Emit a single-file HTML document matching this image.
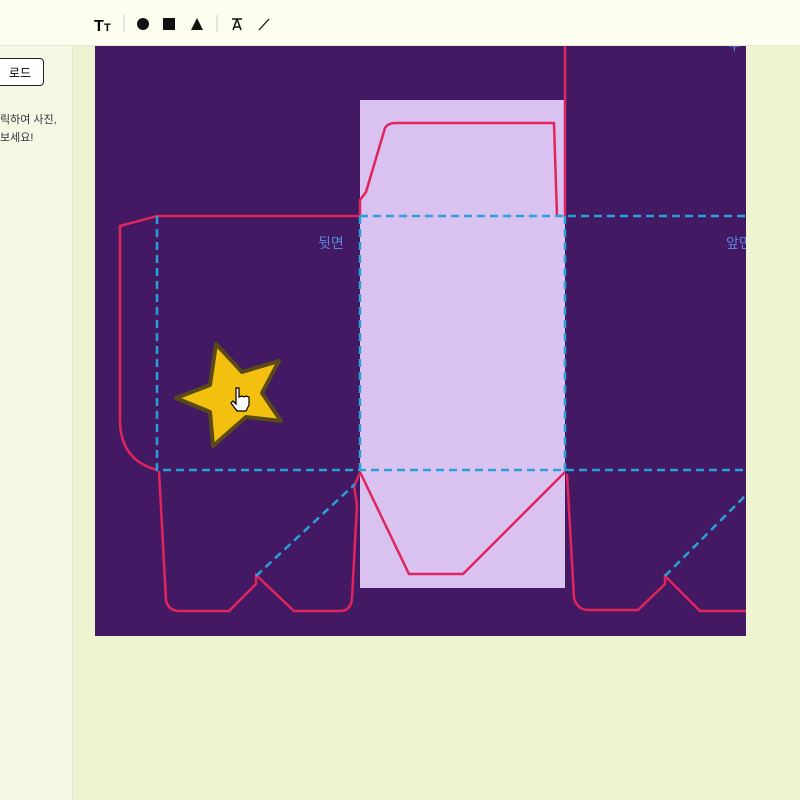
<!DOCTYPE html>
<html><head><meta charset="utf-8"><style>
body{margin:0;width:800px;height:800px;overflow:hidden;background:#eef4d2;font-family:"Liberation Sans","Noto Sans CJK KR",sans-serif;position:relative}
.hdr{position:absolute;left:0;top:0;width:800px;height:45px;background:#fdfdf0;border-bottom:1px solid #e8e8d8}
.side{position:absolute;left:0;top:46px;width:72px;height:754px;background:#f6f8e6;border-right:1px solid #e4e8cc}
.btn{position:absolute;left:-10px;top:58px;width:54px;height:28px;border:1px solid #222;border-radius:4px;background:#fff;font-size:12px;line-height:28px;text-align:right;box-sizing:border-box;padding-right:12px}
.txt{position:absolute;left:0;top:111px;font-size:11px;line-height:18px;color:#333}
svg{position:absolute;left:0;top:0}
</style></head><body>
<div class="hdr"></div>
<div class="side"></div>
<div class="btn">로드</div>
<div class="txt">릭하여 사진,<br>보세요!</div>
<svg width="800" height="800" viewBox="0 0 800 800">
<defs><clipPath id="c"><rect x="95" y="46" width="651" height="590"/></clipPath></defs>
<text x="94" y="31" font-size="16" font-weight="bold" font-family="Liberation Sans">T</text><text x="104" y="31" font-size="11" font-weight="bold" font-family="Liberation Sans">T</text>
<line x1="124" y1="15" x2="124" y2="32" stroke="#ccc"/>
<circle cx="143" cy="24" r="6" fill="#111"/>
<rect x="163" y="18" width="12" height="12" fill="#111"/>
<polygon points="191,30 197,18 203,30" fill="#111"/>
<line x1="217" y1="15" x2="217" y2="32" stroke="#ccc"/>
<path d="M232 19 h10 M237 19 l-4 11 M237 19 l4 11 M234 27 h6" stroke="#111" stroke-width="1.5" fill="none"/>
<line x1="259" y1="30" x2="269" y2="19" stroke="#111" stroke-width="1.3"/>
<g clip-path="url(#c)">
<rect x="95" y="46" width="651" height="590" fill="#421962"/>
<rect x="360" y="100" width="205" height="488" fill="#d9c2f0"/>
<g fill="none" stroke="#e0245e" stroke-width="2.5">
<path d="M565 46 V216"/>
<path d="M360 216 V200 L366 192 L385 128 Q388 123 395 123 H554 L557 216"/>
<path d="M360 216 H157 L120 226 V420 Q120 460 157 470"/>
<path d="M159 471 L166 600 Q168 611 180 611 H229 L256 584 V575 L294 611 H340 Q351 611 352 598 L357 505 L354 486 L360 473"/>
<path d="M360 472 L409 574 H463 L565 472"/>
<path d="M567 474 L574 598 Q577 610 589 610 H638 L665 584 V576 L700 611 H746"/>
</g>
<g fill="none" stroke="#2aa0d8" stroke-width="2.5" stroke-dasharray="8,5">
<path d="M157 216 V470 H746"/>
<path d="M360 216 H746"/>
<path d="M360 216 V472"/>
<path d="M565 216 V472"/>
<path d="M256 576 L355 484"/>
<path d="M665 576 L746 495"/>
</g>
<text x="318" y="248" font-size="14" fill="#5a86dc">뒷면</text>
<text x="726" y="248" font-size="14" fill="#5a86dc">앞면</text>
<text x="728" y="50" font-size="14" fill="#5a86dc">우</text>
</g>
<polygon points="216,344 242,372 279,361 262,393 281,421 246,417 213,446 210,412 176,398 210,385" fill="#f4c00f" stroke="#5a4a1a" stroke-width="4" stroke-linejoin="round"/>
<path d="M236 388 v16 l-3 -3 l-2 2 l6 8 h9 l3 -6 v-8 l-3 -1 l-2 1 l-2 -1 l-3 1 v-9 z" fill="#fff" stroke="#000" stroke-width="1.2"/>
</svg>
</body></html>
